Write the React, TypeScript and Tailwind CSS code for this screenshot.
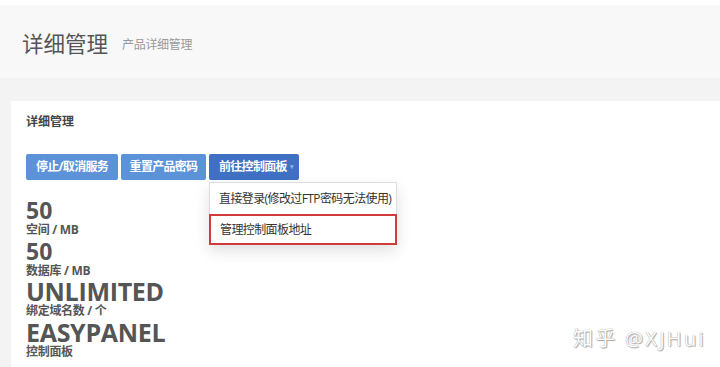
import React from "react";

const stats = [
  { value: "50", label: "空间 / MB", big: false },
  { value: "50", label: "数据库 / MB", big: false },
  { value: "UNLIMITED", label: "绑定域名数 / 个", big: true },
  { value: "EASYPANEL", label: "控制面板", big: true },
];

export default function App() {
  return (
    <div
      className="w-[720px] h-[367px] overflow-hidden bg-white text-[#333] relative"
      style={{ fontFamily: '"Open Sans", "Noto Sans CJK SC", sans-serif' }}
    >
      <div className="h-[5px] bg-white" />
      <div className="h-[73px] bg-[#f8f8f8] flex items-center pl-[22px] pt-[4px]">
        <h1 className="text-[21.5px] text-[#555] leading-none">详细管理</h1>
        <span className="ml-[14px] text-[12px] text-[#999] mt-[3px] tracking-[-0.3px]">产品详细管理</span>
      </div>
      <div className="bg-[#f3f3f3] pt-[23px] pl-[11px] h-[289px]">
        <div className="bg-white h-full pl-[15px] pt-[13px]">
          <h2 className="text-[12px] font-bold text-[#444] leading-[16px]">详细管理</h2>

          <div className="flex gap-[3px] mt-[24px]">
            <button className="h-[26px] w-[92px] rounded-[2px] bg-[#5b92d8] text-white text-[12px] font-bold tracking-[-0.7px]">
              停止/取消服务
            </button>
            <button className="h-[26px] w-[85px] rounded-[2px] bg-[#5b92d8] text-white text-[12px] font-bold tracking-[-0.7px]">
              重置产品密码
            </button>
            <div className="relative">
              <button className="h-[26px] w-[90px] pl-[10px] rounded-[2px] bg-[#3f70c2] text-white text-[12px] font-bold flex items-center tracking-[-0.7px]">
                前往控制面板
                <span className="ml-[3px] text-[7px] text-[#8fb0e6]">▾</span>
              </button>
              <div className="absolute left-0 top-[28px] w-[188px] bg-white border border-[#ddd] shadow-[0_6px_14px_rgba(0,0,0,0.12)] z-10">
                <div className="h-[31px] flex items-center pl-[9px] text-[12px] text-[#333] whitespace-nowrap tracking-[-0.6px]">
                  直接登录(修改过FTP密码无法使用)
                </div>
                <div className="h-[31px] flex items-center pl-[9px] text-[12px] text-[#333] border-2 border-[#d23b3b] -mx-px -mb-px tracking-[-0.6px]">
                  管理控制面板地址
                </div>
              </div>
            </div>
          </div>

          <div className="mt-[20px] flex flex-col">
            {stats.map((s) => (
              <div key={s.label} className="flex flex-col">
                <div
                  className={
                    s.big
                      ? "text-[25px] font-bold text-[#555] leading-[20.3px] tracking-[-0.3px]"
                      : "text-[23px] font-bold text-[#555] leading-[20.3px]"
                  }
                >
                  {s.value}
                </div>
                <div className="text-[12px] font-bold text-[#555] leading-[20.3px] tracking-[-0.3px]">{s.label}</div>
              </div>
            ))}
          </div>
        </div>
      </div>

      <div
        className="absolute left-[573px] top-[324px] text-[20px] text-white tracking-[2.3px] whitespace-nowrap"
        style={{ textShadow: "0 0 1px #888, 1px 1px 1px #aaa" }}
      >
        知乎 @XJHui
      </div>
    </div>
  );
}
